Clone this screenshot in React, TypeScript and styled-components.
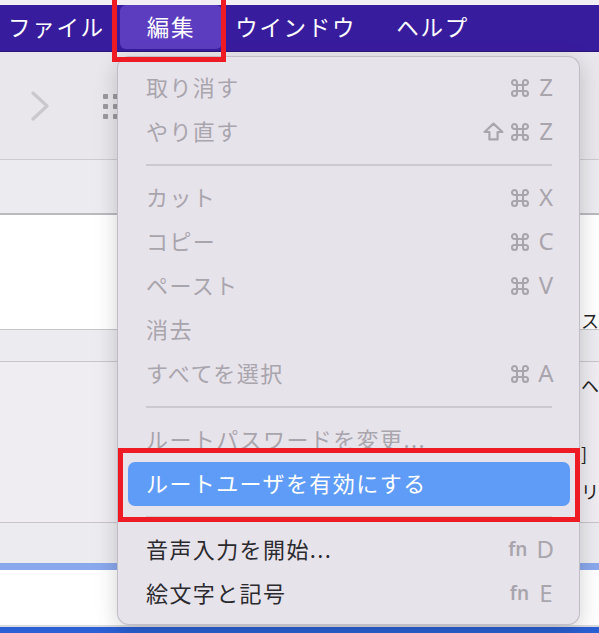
import React from 'react';
import styled, { createGlobalStyle } from 'styled-components';

const GlobalStyle = createGlobalStyle`
  html, body {
    margin: 0;
    padding: 0;
    background: #ffffff;
  }
  body {
    font-family: "Noto Sans CJK JP", "Noto Sans", sans-serif;
  }
`;

const JP = `"Noto Sans CJK JP", "Noto Sans", sans-serif`;
const KEYS = `"Noto Sans", "DejaVu Sans", sans-serif`;

type MenuEntry =
  | { kind: 'item'; label: string; keys?: string[]; disabled?: boolean; active?: boolean }
  | { kind: 'sep' };

const entries: MenuEntry[] = [
  { kind: 'item', label: '取り消す', keys: ['cmd', 'Z'], disabled: true },
  { kind: 'item', label: 'やり直す', keys: ['shift', 'cmd', 'Z'], disabled: true },
  { kind: 'sep' },
  { kind: 'item', label: 'カット', keys: ['cmd', 'X'], disabled: true },
  { kind: 'item', label: 'コピー', keys: ['cmd', 'C'], disabled: true },
  { kind: 'item', label: 'ペースト', keys: ['cmd', 'V'], disabled: true },
  { kind: 'item', label: '消去', disabled: true },
  { kind: 'item', label: 'すべてを選択', keys: ['cmd', 'A'], disabled: true },
  { kind: 'sep' },
  { kind: 'item', label: 'ルートパスワードを変更...', disabled: true },
  { kind: 'item', label: 'ルートユーザを有効にする', active: true },
  { kind: 'sep' },
  { kind: 'item', label: '音声入力を開始...', keys: ['fn', 'D'] },
  { kind: 'item', label: '絵文字と記号', keys: ['fn', 'E'] },
];

const Screen = styled.div`
  position: relative;
  width: 599px;
  height: 633px;
  overflow: hidden;
  display: flex;
  flex-direction: column;
  background: #ffffff;
`;

const TopStrip = styled.div`
  height: 5px;
  flex: 0 0 5px;
  background: #f1eff3;
`;

const MenuBar = styled.div`
  height: 47px;
  flex: 0 0 47px;
  box-sizing: border-box;
  display: flex;
  align-items: stretch;
  padding-left: 8px;
  padding-bottom: 2px;
  background: #381c9e;
  border-bottom: 1px solid #2c1578;
`;

const BarItem = styled.div<{ $active?: boolean }>`
  display: flex;
  align-items: center;
  padding: 0 ${({ $active }) => ($active ? 27 : 20)}px 2px;
  margin: 0 ${({ $active }) => ($active ? -7 : 0)}px;
  font-family: ${JP};
  font-size: 22.5px;
  letter-spacing: 1.7px;
  color: #ffffff;
  border-radius: 6px;
  background: ${({ $active }) => ($active ? '#5c3dc0' : 'transparent')};
  white-space: nowrap;
  &:first-child {
    padding-left: 0;
    padding-right: 22px;
  }
`;

const Toolbar = styled.div`
  height: 108px;
  flex: 0 0 108px;
  box-sizing: border-box;
  display: flex;
  align-items: center;
  gap: 54px;
  padding-left: 31px;
  background: #e9e7ec;
  border-bottom: 1px solid #cdcbd0;
`;

const Dots = styled.div`
  display: grid;
  grid-template-columns: repeat(3, 5px);
  grid-auto-rows: 5px;
  gap: 5px;
  margin-top: 2px;
`;

const Dot = styled.span`
  display: block;
  background: #9b999e;
  border-radius: 1px;
`;

const Band = styled.div<{ $h: number; $border?: string }>`
  height: ${({ $h }) => $h}px;
  flex: 0 0 ${({ $h }) => $h}px;
  box-sizing: border-box;
  background: #ecebef;
  border-bottom: ${({ $border }) => $border ?? '1px solid #c7c5ca'};
`;

const Pane = styled.div<{ $h: number; $bg?: string }>`
  height: ${({ $h }) => $h}px;
  flex: 0 0 ${({ $h }) => $h}px;
  box-sizing: border-box;
  background: ${({ $bg }) => $bg ?? '#ffffff'};
  border-bottom: 1px solid #c7c5ca;
  display: flex;
  flex-direction: column;
  align-items: flex-start;
  padding-left: 581px;
`;

const Peek = styled.div<{ $top: number }>`
  margin-top: ${({ $top }) => $top}px;
  font-family: ${JP};
  font-size: 18px;
  line-height: 22px;
  color: #222222;
  white-space: nowrap;
`;

const Stripe = styled.div<{ $h: number; $c: string }>`
  height: ${({ $h }) => $h}px;
  flex: 0 0 ${({ $h }) => $h}px;
  background: ${({ $c }) => $c};
`;

const Menu = styled.div`
  position: absolute;
  left: 117px;
  top: 56px;
  width: 463px;
  box-sizing: border-box;
  padding: 9px 9px 8px 10px;
  background: #e7e3eb;
  border: 1px solid rgba(60, 50, 70, 0.22);
  border-radius: 12px;
  box-shadow: 0 6px 22px rgba(0, 0, 0, 0.18);
  display: flex;
  flex-direction: column;
`;

const Row = styled.div<{ $disabled?: boolean; $active?: boolean }>`
  height: 44px;
  box-sizing: border-box;
  display: flex;
  align-items: center;
  justify-content: space-between;
  padding: 0 16px 4px 18px;
  border-radius: 7px;
  background: ${({ $active }) => ($active ? '#5f9cf7' : 'transparent')};
  color: ${({ $disabled, $active }) =>
    $active ? '#ffffff' : $disabled ? '#a9a5ad' : '#2b2a2e'};
`;

const Label = styled.span`
  font-family: ${JP};
  font-size: 22px;
  letter-spacing: 1.4px;
  white-space: nowrap;
`;

const Keys = styled.span`
  display: flex;
  align-items: center;
  gap: 6px;
  font-family: ${KEYS};
  font-size: 24px;
  color: #a9a5ad;
  svg {
    display: block;
    margin-top: 3px;
  }
`;

const Letter = styled.span`
  display: inline-block;
  min-width: 16px;
  margin-left: 2px;
  text-align: center;
`;

const Fn = styled.span`
  font-family: "Noto Sans", sans-serif;
  font-size: 19px;
  font-weight: 600;
  margin-right: 1px;
  margin-top: 2px;
`;

const Sep = styled.div`
  height: 22px;
  display: flex;
  align-items: center;
  padding: 0 18px;
  &::after {
    content: '';
    flex: 1;
    height: 2px;
    background: #cdc9d0;
  }
`;

const Mark = styled.div<{ $l: number; $t: number; $w: number; $h: number }>`
  position: absolute;
  left: ${({ $l }) => $l}px;
  top: ${({ $t }) => $t}px;
  width: ${({ $w }) => $w}px;
  height: ${({ $h }) => $h}px;
  box-sizing: border-box;
  border: 5px solid #ee1b24;
  pointer-events: none;
`;

const Chevron = () => (
  <svg width="18" height="30" viewBox="0 0 18 30" fill="none">
    <path d="M2 2 L16 15 L2 28" stroke="#cac8cd" strokeWidth="3.2" strokeLinecap="round" strokeLinejoin="round" />
  </svg>
);

const CommandIcon = () => (
  <svg width="20" height="20" viewBox="0 0 20 20" fill="none">
    <path
      d="M7 7 V4.5 A2.5 2.5 0 1 0 4.5 7 H15.5 A2.5 2.5 0 1 0 13 4.5 V15.5 A2.5 2.5 0 1 0 15.5 13 H4.5 A2.5 2.5 0 1 0 7 15.5 Z"
      stroke="currentColor"
      strokeWidth="2.1"
      strokeLinejoin="round"
    />
  </svg>
);

const ShiftIcon = () => (
  <svg width="21" height="19" viewBox="0 0 21 19" fill="none">
    <path
      d="M10.5 1.6 L19.4 10 H14.6 V17.4 H6.4 V10 H1.6 Z"
      stroke="currentColor"
      strokeWidth="2.2"
      strokeLinejoin="round"
    />
  </svg>
);

const KeyGlyph = ({ k }: { k: string }) => {
  if (k === 'cmd') return <CommandIcon />;
  if (k === 'shift') return <ShiftIcon />;
  if (k === 'fn') return <Fn>fn</Fn>;
  return <Letter>{k}</Letter>;
};

export default function App() {
  return (
    <>
      <GlobalStyle />
      <Screen>
        <TopStrip />
        <MenuBar>
          <BarItem>ファイル</BarItem>
          <BarItem $active>編集</BarItem>
          <BarItem>ウインドウ</BarItem>
          <BarItem>ヘルプ</BarItem>
        </MenuBar>
        <Toolbar>
          <Chevron />
          <Dots>
            {Array.from({ length: 9 }).map((_, i) => (
              <Dot key={i} />
            ))}
          </Dots>
        </Toolbar>
        <Band $h={55} $border="2px solid #bbb9be" />
        <Pane $h={115}>
          <Peek $top={94}>ス</Peek>
        </Pane>
        <Band $h={32} />
        <Pane $h={161} $bg="#efedf2">
          <Peek $top={12}>ヘ</Peek>
          <Peek $top={46}>]</Peek>
          <Peek $top={16}>リ</Peek>
        </Pane>
        <Band $h={40} $border="none" />
        <Stripe $h={7} $c="#8aa8ec" />
        <Stripe $h={55} $c="#ffffff" />
        <Stripe $h={2} $c="#dcdadf" />
        <Stripe $h={6} $c="#2a60d4" />

        <Menu>
          {entries.map((e, i) =>
            e.kind === 'sep' ? (
              <Sep key={i} />
            ) : (
              <Row key={i} $disabled={e.disabled} $active={e.active}>
                <Label>{e.label}</Label>
                {e.keys && (
                  <Keys>
                    {e.keys.map((k, j) => (
                      <KeyGlyph key={j} k={k} />
                    ))}
                  </Keys>
                )}
              </Row>
            )
          )}
        </Menu>

        <Mark $l={112} $t={-5} $w={114} $h={67} />
        <Mark $l={118} $t={448} $w={462} $h={74} />
      </Screen>
    </>
  );
}
